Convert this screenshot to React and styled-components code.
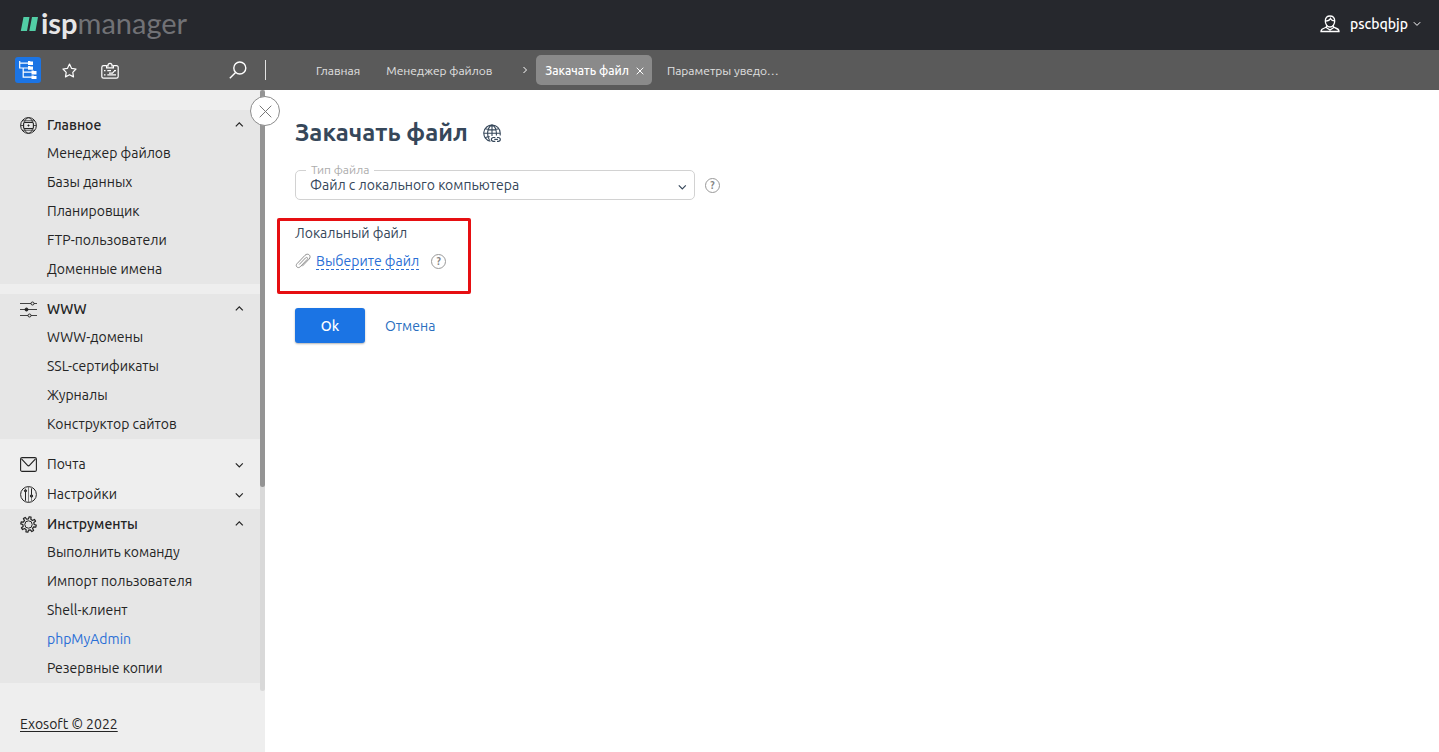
import React, { useRef } from "react";
import styled, { createGlobalStyle, css } from "styled-components";

const GlobalStyle = createGlobalStyle`
  *, *::before, *::after { box-sizing: border-box; }
  body {
    margin: 0;
    background: #fff;
    color: #36475a;
    font-family: Ubuntu, "Noto Sans", "Open Sans", sans-serif;
    font-size: 14px;
    line-height: 20px;
  }
  button, select, input { font: inherit; color: inherit; }
  svg { display: block; flex: none; }
`;

const Page = styled.div`
  min-height: 100vh;
  display: flex;
  flex-direction: column;
`;

const Header = styled.header`
  height: 50px;
  padding: 0 18px 0 20px;
  display: flex;
  align-items: center;
  justify-content: space-between;
  background: #26282d;
`;

const Logo = styled.a`
  display: flex;
  align-items: center;
  gap: 2px;
  color: #717276;
  font-family: Lato, sans-serif;
  font-size: 29px;
  line-height: 28px;
  text-decoration: none;
  padding-bottom: 5px;

  svg { margin-top: 4px; }
  strong { color: #e6e6e7; font-weight: 700; }
`;

const UserButton = styled.button`
  display: flex;
  align-items: center;
  gap: 5px;
  padding: 0 0 2px;
  border: 0;
  background: none;
  color: #fff;
  font-weight: 500;
  line-height: 20px;

  svg:first-child { margin-right: 5px; }
`;

const Toolbar = styled.div`
  height: 40px;
  display: flex;
  align-items: center;
  background: #5a5a5a;
  color: #fff;
`;

const ToolGroup = styled.div`
  width: 266px;
  height: 20px;
  flex: none;
  display: flex;
  align-items: center;
  gap: 15px;
  padding: 0 14px 0 15px;
  border-right: 1px solid #e2e2e2;
`;

const ToolButton = styled.button`
  width: 26px;
  height: 26px;
  flex: none;
  display: flex;
  align-items: center;
  justify-content: center;
  padding: 0;
  border: 0;
  border-radius: 3px;
  color: #fff;
  background: ${(p) => (p.$active ? "#1b74e4" : "transparent")};
  ${(p) => p.$last && css`margin-left: auto;`}
`;

const Tabs = styled.nav`
  display: flex;
  align-items: center;
  padding-left: 50px;
  font-size: 12px;
`;

const TabLink = styled.a`
  padding-top: 2px;
  color: #e0e0e0;
  text-decoration: none;
  white-space: nowrap;
  margin-right: ${(p) => p.$gap || 0}px;
`;

const ActiveTab = styled.div`
  height: 30px;
  display: flex;
  align-items: center;
  gap: 7px;
  margin: 0 15px 0 8px;
  padding: 2px 8px 0 9px;
  border-radius: 5px;
  background: #8a8a8a;
  color: #fff;
  font-weight: 500;
  white-space: nowrap;
`;

const PlainButton = styled.button`
  display: flex;
  padding: 0;
  border: 0;
  background: none;
`;

const Body = styled.div`
  flex: 1;
  display: flex;
`;

const Sidebar = styled.aside`
  position: relative;
  width: 265px;
  flex: none;
  display: flex;
  flex-direction: column;
  background: #eee;
  color: #242424;
`;

const NavArea = styled.div`
  flex: 1;
  display: grid;
  grid-template-columns: 1fr 5px;
`;

const Menu = styled.nav`
  padding-top: 20px;
`;

const Track = styled.div`
  background: #d9d9d9;
  border-radius: 0 0 3px 3px;
`;

const Thumb = styled.div`
  height: 66%;
  background: #949494;
  border-radius: 3px;
`;

const CollapseButton = styled.button`
  position: absolute;
  top: 6px;
  right: -15px;
  width: 30px;
  height: 30px;
  display: flex;
  align-items: center;
  justify-content: center;
  padding: 0;
  border: 1px solid #8c8c8c;
  border-radius: 50%;
  background: #fff;
  color: #777;
`;

const Group = styled.section`
  margin-bottom: ${(p) => (p.$open ? 10 : 0)}px;
  background: ${(p) => (p.$open ? "#e6e6e6" : "transparent")};

  &:last-child { margin-bottom: 0; }
`;

const GroupHeader = styled.button`
  width: 100%;
  height: 30px;
  display: flex;
  align-items: center;
  gap: 10px;
  padding: 0 16px 0 20px;
  border: 0;
  background: none;
  text-align: left;
  font-weight: ${(p) => (p.$open ? 500 : 400)};

  span { flex: 1; }
`;

const Items = styled.ul`
  margin: -2px 0 0;
  padding: 0 0 1px;
  list-style: none;
`;

const ItemLink = styled.a`
  height: 29px;
  display: flex;
  align-items: center;
  padding-left: 47px;
  color: ${(p) => (p.$current ? "#2a6fd6" : "inherit")};
  text-decoration: none;
`;

const SidebarFooter = styled.footer`
  height: 61px;
  padding: 23px 20px 0;

  a { color: inherit; text-underline-offset: 2px; }
`;

const Main = styled.main`
  flex: 1;
  padding: 27px 30px;
`;

const TitleRow = styled.div`
  display: flex;
  align-items: center;
  gap: 15px;

  h1 {
    margin: 0;
    font-size: 24px;
    line-height: 32px;
    font-weight: 600;
  }
`;

const SelectRow = styled.div`
  display: flex;
  align-items: center;
  gap: 10px;
  margin-top: 21px;
`;

const SelectField = styled.div`
  position: relative;
  width: 400px;

  label {
    position: absolute;
    top: -7px;
    left: 11px;
    padding: 0 5px;
    background: #fff;
    color: #adadad;
    font-size: 12px;
    line-height: 14px;
  }

  select {
    display: block;
    width: 100%;
    height: 30px;
    padding: 0 30px 0 14px;
    border: 1px solid #d2d2d2;
    border-radius: 5px;
    background: #fff;
    appearance: none;
  }

  svg {
    position: absolute;
    top: 12px;
    right: 8px;
    pointer-events: none;
  }
`;

const FileField = styled.section`
  width: 194px;
  height: 76px;
  margin: 18px 0 14px -18px;
  padding: 2px 15px;
  border: 3px solid #e60f12;
  border-radius: 2px;
`;

const FieldName = styled.div`
  line-height: 20px;
`;

const FileRow = styled.div`
  display: flex;
  align-items: center;
  gap: 5px;
  margin-top: 10px;
`;

const ChooseButton = styled.button`
  margin-right: 7px;
  padding: 0;
  border: 0;
  border-bottom: 1px dashed #2a6fd6;
  background: none;
  color: #2a6fd6;
  line-height: 16px;
  white-space: nowrap;
`;

const Actions = styled.div`
  display: flex;
  align-items: center;
  gap: 20px;
`;

const SubmitButton = styled.button`
  width: 70px;
  height: 35px;
  padding: 0;
  border: 0;
  border-radius: 3px;
  background: #1b74e4;
  box-shadow: 0 1px 2px rgba(0, 0, 0, 0.3);
  color: #fff;
  font-weight: 500;
`;

const CancelLink = styled.a`
  color: #2a6fc0;
  text-decoration: none;
`;

const Svg = ({ w, h = w, sw = 1, children, ...rest }) => (
  <svg
    width={w}
    height={h}
    viewBox={`0 0 ${w} ${h}`}
    fill="none"
    stroke="currentColor"
    strokeWidth={sw}
    aria-hidden="true"
    {...rest}
  >
    {children}
  </svg>
);

const Chevron = ({ up }) => (
  <Svg w={10} h={8} sw={1.2}>
    <path d={up ? "M1.800 5.300 5.300 1.800l3.500 3.500" : "M1.800 3.300 5.300 6.800l3.500-3.500"} />
  </Svg>
);

const Cross = ({ size, sw }) => (
  <Svg w={size} sw={sw}>
    <path d={`M.7.7 ${size - 0.7} ${size - 0.7}M${size - 0.7}.7.7 ${size - 0.7}`} />
  </Svg>
);

const LogoMark = () => (
  <svg width="19" height="15" viewBox="0 0 19 15" fill="#52cda5" aria-hidden="true">
    <path d="M3.500 0H9.500L7 14H.8ZM12 0h6l-2.500 14H9.300Z" />
  </svg>
);

const UserIcon = () => (
  <Svg w={20} h={18} sw={1.300}>
    <path d="M5.300 6C5.300 2.600 7.100 1 10 1s4.700 1.700 4.700 5c0 2.700-1.700 6-4.700 6S5.300 8.700 5.300 6Z" />
    <path d="M5.500 6.200c2.500-.2 4.200-1 5-2.700.7 1.500 1.900 2.300 4 2.400M6.800 10.500c0 1.600-.6 2-2.300 2.500C2.300 13.600 1 14.300 1 16.500h18c0-2.200-1.300-2.900-3.500-3.500-1.700-.5-2.300-.9-2.300-2.500M6.500 12.700 10 15l3.500-2.300" />
  </Svg>
);

const TreeIcon = () => (
  <Svg w={18} sw={1.2}>
    <path d="M.7 0v7h9M.7 2.200h9M4.200 7v9.100h9M4.200 11.200h9" />
    <g fill="currentColor" stroke="none">
      <path d="M9 0h2l.6.6H14v3.400H9ZM9 5h2l.6.5H14v3.300H9ZM12.500 9.500h2l.6.6h2.400v3.400h-5ZM12.500 14.400h2l.6.5h2.400V18h-5Z" />
    </g>
  </Svg>
);

const StarIcon = () => (
  <Svg w={15} sw={1.2} strokeLinejoin="round">
    <path d="m7.500 1.100 2 4.200 4.500.7-3.200 3.300.7 4.600-4-2.200-4 2.200.7-4.600L1 6l4.500-.7Z" />
  </Svg>
);

const BoardIcon = () => (
  <Svg w={18} h={17} sw={1.2}>
    <path d="M5.500 3.700H2.600C1.400 3.700.8 4.300.8 5.400v9c0 1.100.6 1.700 1.800 1.700h12.800c1.200 0 1.800-.6 1.800-1.700v-9c0-1.100-.6-1.700-1.800-1.700h-2.900M5.600 5.800h6.800V3.900h-1.500a2 2 0 1 0-3.800 0H5.600Z" />
    <path d="M3 8.700h1.500M6.300 8.700H10M13 8.700h2M3 12.900h1.500M6.300 12.900H15M8 11.200h3.500l2.200-2.500" />
  </Svg>
);

const SearchIcon = () => (
  <Svg w={18} sw={1.4}>
    <circle cx="10.800" cy="7" r="6" />
    <path d="M6.600 11.400.8 17.200" />
  </Svg>
);

const GlobeBoxIcon = () => (
  <Svg w={17}>
    <circle cx="8.500" cy="8.500" r="7.900" />
    <path d="M4.500 5.200C5.200 2.500 6.600.8 8.500.8s3.300 1.700 4 4.400M4.500 11.800c.7 2.700 2.100 4.400 4 4.400s3.300-1.700 4-4.400M2.500 3.800h12M2.500 13.200h12M.6 8.500h3M13.400 8.500h3" strokeOpacity=".8" />
    <rect x="3.600" y="5.500" width="9.800" height="6" rx="1" strokeWidth="1.100" />
    <path d="M8.500 7.500v2M7.500 8.500h2" />
  </Svg>
);

const SlidersIcon = () => (
  <Svg w={17}>
    <path d="M0 2.500h11M14 2.500h3M0 8.500h17M0 14.500h8M11 14.500h6" strokeOpacity=".85" />
    <circle cx="12.500" cy="2.500" r="1.500" />
    <circle cx="6.500" cy="8.500" r="1.500" fill="currentColor" />
    <circle cx="9.500" cy="14.500" r="1.500" />
  </Svg>
);

const MailIcon = () => (
  <Svg w={17} sw={1.100}>
    <rect x=".6" y="1.600" width="15.800" height="13.800" rx="1.500" />
    <path d="m1.500 2.800 5.800 6.400c.8.9 1.600.9 2.400 0l5.800-6.400" />
  </Svg>
);

const TuneIcon = () => (
  <Svg w={17}>
    <circle cx="8.500" cy="8.500" r="7.900" />
    <path d="M5.500 2.500v12.500M11.500 2.500V15M8.500.8v15.400" strokeOpacity=".55" />
    <path d="M5.500 6v8.500M11.500 2.500v6" />
    <circle cx="5.500" cy="4.800" r="1.100" fill="currentColor" fillOpacity=".6" />
    <circle cx="11.500" cy="10" r="1.200" fill="currentColor" fillOpacity=".6" />
  </Svg>
);

const GearIcon = () => (
  <Svg w={17} sw={1.200} strokeLinejoin="round">
    {/* eight-tooth gear outline */}
    <path d="M7.300 3 7.500.8h2L9.700 3l1.800.7 1.700-1.400 1.500 1.500-1.400 1.700.7 1.800 2.200.2v2l-2.200.2-.7 1.800 1.400 1.700-1.500 1.500-1.700-1.400-1.800.7-.2 2.200h-2L7.300 14l-1.800-.7-1.700 1.400-1.500-1.500 1.400-1.700L3 9.700.8 9.500v-2L3 7.300l.7-1.800-1.400-1.700 1.500-1.500 1.700 1.400Z" transform="rotate(12 8.500 8.500)" />
    <circle cx="8.500" cy="8.500" r="3.700" strokeWidth="1" />
  </Svg>
);

const GlobeLinkIcon = () => (
  <Svg w={18} h={19} sw={1.100}>
    <path d="M7.500 17.300A8.200 8.200 0 1 1 17.200 9v2.500" />
    <path d="M6.600 16.500C5.200 14.500 4.600 12 4.600 9.300S6.200 1.100 9 1.100s4.400 5 4.400 8.200v2.200M9 1v11M2.200 4.800c4.200 1.300 9.400 1.300 13.600 0M.8 9.300h16.400M1.800 13.700c1.700-.6 3.400-.9 5-1" />
    <path d="M12.300 13.500h-2a1.900 1.900 0 1 0 0 3.800h2M14 13.500h1.400a1.900 1.900 0 1 1 0 3.800H14M11.300 15.400h3.600" strokeWidth="1.200" />
  </Svg>
);

const ClipIcon = () => (
  <Svg w={16} h={17} style={{ color: "#8e8e8e" }}>
    <path d="m4.200 11.500 6.300-6.600c1.400-1.300 2.900.2 1.700 1.500l-7 7.400c-2.300 2.200-5.400-.7-3.200-3.100l8-8.400c3-3 6.900.7 4.100 3.800L7.200 13.300" />
  </Svg>
);

const HelpButton = styled.button`
  width: 15px;
  height: 15px;
  display: flex;
  align-items: center;
  justify-content: center;
  padding: 0;
  border: 1px solid #999;
  border-radius: 50%;
  background: none;
  color: #858585;
  font-size: 10px;
  line-height: 13px;
  font-weight: 600;
`;

const Help = () => <HelpButton type="button" aria-label="Помощь">?</HelpButton>;

const groups = [
  {
    name: "Главное",
    icon: GlobeBoxIcon,
    items: ["Менеджер файлов", "Базы данных", "Планировщик", "FTP-пользователи", "Доменные имена"],
  },
  {
    name: "WWW",
    icon: SlidersIcon,
    items: ["WWW-домены", "SSL-сертификаты", "Журналы", "Конструктор сайтов"],
  },
  { name: "Почта", icon: MailIcon },
  { name: "Настройки", icon: TuneIcon },
  {
    name: "Инструменты",
    icon: GearIcon,
    items: ["Выполнить команду", "Импорт пользователя", "Shell-клиент", "phpMyAdmin", "Резервные копии"],
  },
];

const MenuGroup = ({ name, icon: Icon, items }) => {
  const open = Boolean(items);
  return (
    <Group $open={open}>
      <GroupHeader type="button" $open={open} aria-expanded={open}>
        <Icon />
        <span>{name}</span>
        <Chevron up={open} />
      </GroupHeader>
      {open && (
        <Items>
          {items.map((item) => (
            <li key={item}>
              <ItemLink href="#" $current={item === "phpMyAdmin"}>{item}</ItemLink>
            </li>
          ))}
        </Items>
      )}
    </Group>
  );
};

export default function App() {
  const fileInput = useRef(null);
  return (
    <Page>
      <GlobalStyle />
      <Header>
        <Logo href="#">
          <LogoMark />
          <span><strong>isp</strong>manager</span>
        </Logo>
        <UserButton type="button">
          <UserIcon />
          pscbqbjp
          <Svg w={8} h={6}><path d="m.8 1.200 3.200 3.200 3.200-3.200" /></Svg>
        </UserButton>
      </Header>
      <Toolbar>
        <ToolGroup>
          <ToolButton type="button" $active aria-label="Меню"><TreeIcon /></ToolButton>
          <ToolButton type="button" aria-label="Избранное"><StarIcon /></ToolButton>
          <ToolButton type="button" aria-label="Задачи"><BoardIcon /></ToolButton>
          <ToolButton type="button" $last aria-label="Поиск"><SearchIcon /></ToolButton>
        </ToolGroup>
        <Tabs>
          <TabLink href="#" $gap={26}>Главная</TabLink>
          <TabLink href="#" $gap={30}>Менеджер файлов</TabLink>
          <Svg w={6} h={8}><path d="m1.500 1 3 3-3 3" /></Svg>
          <ActiveTab>
            Закачать файл
            <PlainButton type="button" aria-label="Закрыть"><Cross size={8} sw={1} /></PlainButton>
          </ActiveTab>
          <TabLink href="#">Параметры уведо…</TabLink>
        </Tabs>
      </Toolbar>
      <Body>
        <Sidebar>
          <NavArea>
            <Menu>
              {groups.map((g) => <MenuGroup key={g.name} {...g} />)}
            </Menu>
            <Track><Thumb /></Track>
          </NavArea>
          <SidebarFooter><a href="#">Exosoft © 2022</a></SidebarFooter>
          <CollapseButton type="button" aria-label="Свернуть меню">
            <Cross size={13} sw={1} />
          </CollapseButton>
        </Sidebar>
        <Main>
          <TitleRow>
            <h1>Закачать файл</h1>
            <GlobeLinkIcon />
          </TitleRow>
          <SelectRow>
            <SelectField>
              <select id="file-type">
                <option>Файл с локального компьютера</option>
              </select>
              <label htmlFor="file-type">Тип файла</label>
              <Chevron />
            </SelectField>
            <Help />
          </SelectRow>
          <FileField>
            <FieldName id="local-file">Локальный файл</FieldName>
            <FileRow>
              <ClipIcon />
              <ChooseButton
                type="button"
                aria-describedby="local-file"
                onClick={() => fileInput.current.click()}
              >
                Выберите файл
              </ChooseButton>
              <input ref={fileInput} type="file" hidden aria-labelledby="local-file" />
              <Help />
            </FileRow>
          </FileField>
          <Actions>
            <SubmitButton type="submit">Ok</SubmitButton>
            <CancelLink href="#">Отмена</CancelLink>
          </Actions>
        </Main>
      </Body>
    </Page>
  );
}
